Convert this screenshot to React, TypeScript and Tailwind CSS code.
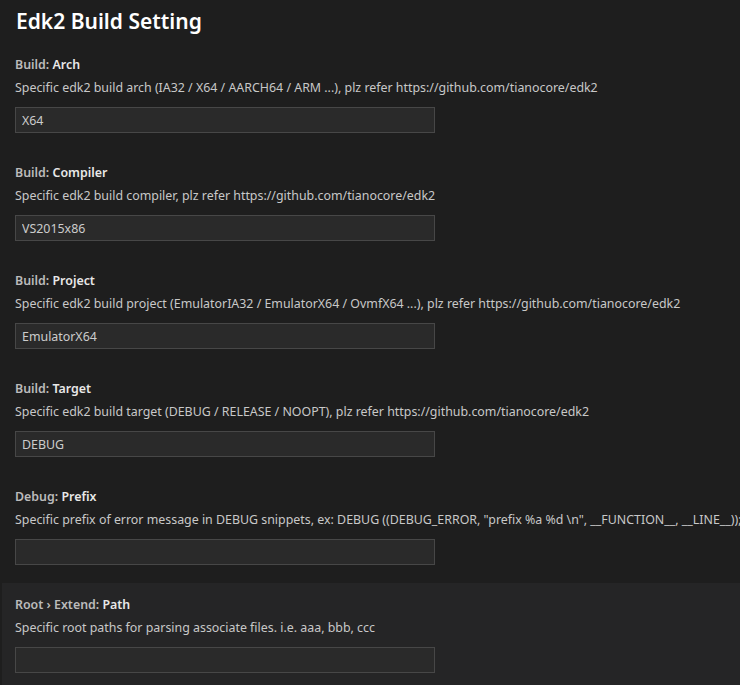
const settings = [
  {
    scope: "Build",
    name: "Arch",
    desc: "Specific edk2 build arch (IA32 / X64 / AARCH64 / ARM ...), plz refer https://github.com/tianocore/edk2",
    value: "X64",
  },
  {
    scope: "Build",
    name: "Compiler",
    desc: "Specific edk2 build compiler, plz refer https://github.com/tianocore/edk2",
    value: "VS2015x86",
  },
  {
    scope: "Build",
    name: "Project",
    desc: "Specific edk2 build project (EmulatorIA32 / EmulatorX64 / OvmfX64 ...), plz refer https://github.com/tianocore/edk2",
    value: "EmulatorX64",
  },
  {
    scope: "Build",
    name: "Target",
    desc: "Specific edk2 build target (DEBUG / RELEASE / NOOPT), plz refer https://github.com/tianocore/edk2",
    value: "DEBUG",
  },
  {
    scope: "Debug",
    name: "Prefix",
    desc: 'Specific prefix of error message in DEBUG snippets, ex: DEBUG ((DEBUG_ERROR, "prefix %a %d \\n", __FUNCTION__, __LINE__));',
    value: "",
  },
  {
    scope: "Root › Extend",
    name: "Path",
    desc: "Specific root paths for parsing associate files. i.e. aaa, bbb, ccc",
    value: "",
    focused: true,
  },
];

function SettingItem({
  scope,
  name,
  desc,
  value,
  focused,
}: {
  scope: string;
  name: string;
  desc: string;
  value: string;
  focused?: boolean;
}) {
  return (
    <div
      className={
        "pt-[13px] pb-[18px] whitespace-nowrap " +
        (focused ? "ml-[2px] pl-[13px] bg-[#252526]" : "pl-[15px]")
      }
    >
      <div className="h-[18px] leading-[18px] text-[12.4px] text-[#bbbbbb] font-semibold">
        {scope}: <span className="text-[#e8e8e8]">{name}</span>
      </div>
      <div className="mt-[5px] h-[18px] leading-[18px] text-[12.4px] text-[#c8c8c8]">
        {desc}
      </div>
      <input
        readOnly
        value={value}
        className="mt-[10px] block w-[420px] h-[26px] px-[6px] text-[12.4px] text-[#cccccc] bg-[#2a2a2a] border border-[#474747] outline-none"
      />
    </div>
  );
}

export default function App() {
  return (
    <div
      className="w-[740px] h-[685px] overflow-hidden bg-[#1e1e1e]"
      style={{ fontFamily: '"Noto Sans", "Open Sans", sans-serif' }}
    >
      <div className="h-[43px] pl-[16px] flex items-center text-[21px] font-semibold text-white">
        Edk2 Build Setting
      </div>
      {settings.map((s) => (
        <SettingItem key={s.scope + s.name} {...s} />
      ))}
    </div>
  );
}
